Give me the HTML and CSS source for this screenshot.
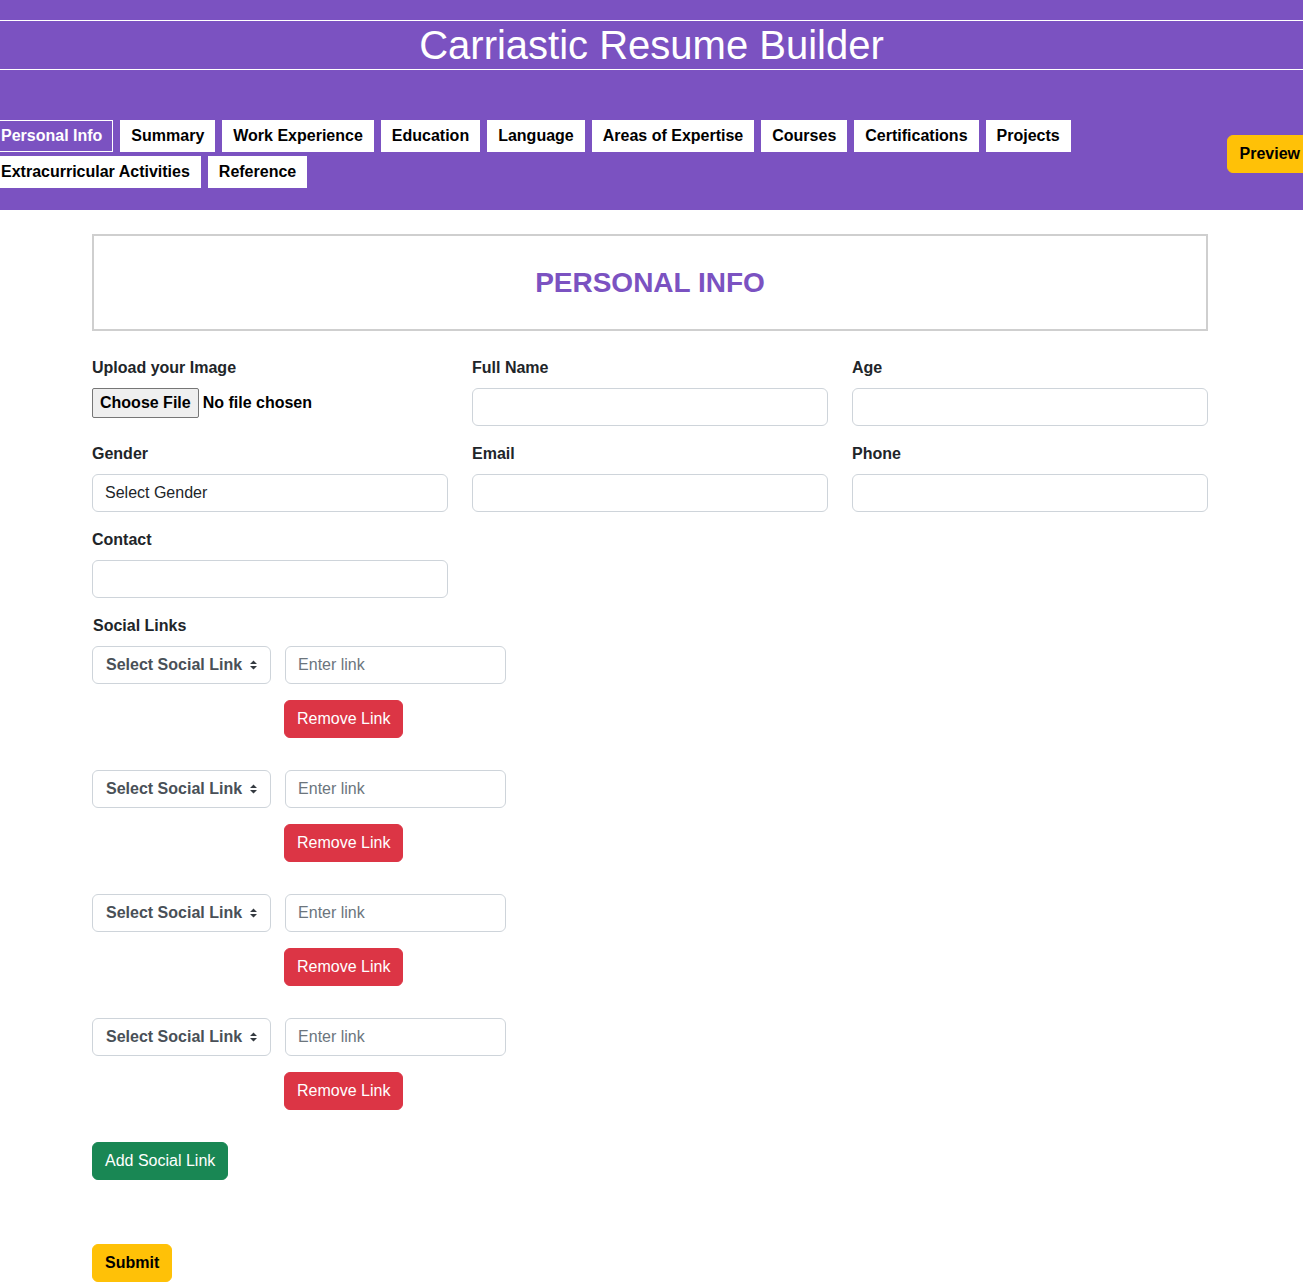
FILE: index.html
```html
<!DOCTYPE html>
<html lang="en">
<head>
<meta charset="utf-8">
<title>Carriastic Resume Builder</title>
<link rel="stylesheet" href="styles.css">
</head>
<body>
<header class="header">
  <h1 class="title">Carriastic Resume Builder</h1>
  <nav class="nav">
    <div class="tabs">
      <span class="tab active">Personal Info</span>
      <span class="tab">Summary</span>
      <span class="tab">Work Experience</span>
      <span class="tab">Education</span>
      <span class="tab">Language</span>
      <span class="tab">Areas of Expertise</span>
      <span class="tab">Courses</span>
      <span class="tab">Certifications</span>
      <span class="tab">Projects</span>
      <span class="tab">Extracurricular Activities</span>
      <span class="tab">Reference</span>
    </div>
    <button class="btn btn-warning btn-bold">Preview</button>
  </nav>
</header>

<main class="container">
  <div class="section-box">
    <h2 class="section-title">PERSONAL INFO</h2>
  </div>

  <div class="grid">
    <div class="field">
      <label class="label">Upload your Image</label>
      <div class="file">
        <span class="file-btn">Choose File</span>
        <span class="file-text">No file chosen</span>
      </div>
    </div>
    <div class="field">
      <label class="label">Full Name</label>
      <input class="input" type="text">
    </div>
    <div class="field">
      <label class="label">Age</label>
      <input class="input" type="text">
    </div>
    <div class="field">
      <label class="label">Gender</label>
      <div class="input fake-select">Select Gender</div>
    </div>
    <div class="field">
      <label class="label">Email</label>
      <input class="input" type="text">
    </div>
    <div class="field">
      <label class="label">Phone</label>
      <input class="input" type="text">
    </div>
    <div class="field">
      <label class="label">Contact</label>
      <input class="input" type="text">
    </div>
  </div>

  <label class="label social-label">Social Links</label>

  <div class="social-row">
    <div class="social-select">Select Social Link
      <svg class="arrows" width="7" height="10" viewBox="0 0 7 10"><path d="M0 4 L3.5 0.5 L7 4 Z M0 6 L3.5 9.5 L7 6 Z" fill="#343a40"/></svg>
    </div>
    <div class="link-col">
      <input class="input link-input" type="text" placeholder="Enter link">
      <button class="btn btn-danger">Remove Link</button>
    </div>
  </div>

  <div class="social-row">
    <div class="social-select">Select Social Link
      <svg class="arrows" width="7" height="10" viewBox="0 0 7 10"><path d="M0 4 L3.5 0.5 L7 4 Z M0 6 L3.5 9.5 L7 6 Z" fill="#343a40"/></svg>
    </div>
    <div class="link-col">
      <input class="input link-input" type="text" placeholder="Enter link">
      <button class="btn btn-danger">Remove Link</button>
    </div>
  </div>

  <div class="social-row">
    <div class="social-select">Select Social Link
      <svg class="arrows" width="7" height="10" viewBox="0 0 7 10"><path d="M0 4 L3.5 0.5 L7 4 Z M0 6 L3.5 9.5 L7 6 Z" fill="#343a40"/></svg>
    </div>
    <div class="link-col">
      <input class="input link-input" type="text" placeholder="Enter link">
      <button class="btn btn-danger">Remove Link</button>
    </div>
  </div>

  <div class="social-row">
    <div class="social-select">Select Social Link
      <svg class="arrows" width="7" height="10" viewBox="0 0 7 10"><path d="M0 4 L3.5 0.5 L7 4 Z M0 6 L3.5 9.5 L7 6 Z" fill="#343a40"/></svg>
    </div>
    <div class="link-col">
      <input class="input link-input" type="text" placeholder="Enter link">
      <button class="btn btn-danger">Remove Link</button>
    </div>
  </div>

  <div class="actions">
    <button class="btn btn-success">Add Social Link</button>
    <button class="btn btn-warning btn-bold submit">Submit</button>
  </div>
</main>
</body>
</html>
```

FILE: styles.css
```css
html, body {
  overflow-x: hidden;
}

body {
  margin: 0;
  font-family: "Liberation Sans", Arial, sans-serif;
  font-size: 16px;
  color: #212529;
  background: #fff;
}

.header {
  background: #7b52c1;
  padding-top: 20px;
}

.title {
  margin: 0;
  border-top: 1px solid #fff;
  border-bottom: 1px solid #fff;
  font-size: 40px;
  font-weight: normal;
  line-height: 48px;
  text-align: center;
  color: #fff;
}

.nav {
  display: flex;
  align-items: center;
  margin: 0 -10px;
  padding: 50px 0 22px;
}

.tabs {
  flex: 1;
  display: flex;
  flex-wrap: wrap;
  gap: 4px 7px;
}

.tab {
  display: block;
  background: #fff;
  border: 1px solid #fff;
  padding: 0 10px;
  font-weight: bold;
  font-size: 16px;
  line-height: 30px;
  color: #000;
  white-space: nowrap;
}

.tab.active {
  background: transparent;
  color: #fff;
}

.btn {
  display: inline-block;
  font-family: "Liberation Sans", Arial, sans-serif;
  font-size: 16px;
  line-height: 24px;
  padding: 6px 12px;
  border: 1px solid transparent;
  border-radius: 6px;
  cursor: pointer;
  white-space: nowrap;
}

.btn-bold {
  font-weight: bold;
}

.btn-warning {
  background: #ffc107;
  border-color: #ffc107;
  color: #000;
}

.btn-danger {
  background: #dc3545;
  border-color: #dc3545;
  color: #fff;
}

.btn-success {
  background: #198754;
  border-color: #198754;
  color: #fff;
}

.container {
  width: 1116px;
  margin-left: 92px;
  padding-top: 24px;
  padding-bottom: 40px;
}

.section-box {
  height: 97px;
  box-sizing: border-box;
  border: 2px solid #cfcfcf;
  display: flex;
  align-items: center;
  justify-content: center;
}

.section-title {
  margin: 0;
  font-size: 28px;
  font-weight: bold;
  color: #7b52c1;
  line-height: 34px;
}

.grid {
  display: grid;
  grid-template-columns: repeat(3, 356px);
  column-gap: 24px;
  margin-top: 25px;
}

.field {
  margin-bottom: 16px;
}

.label {
  display: block;
  font-weight: bold;
  line-height: 24px;
  margin-bottom: 8px;
  color: #212529;
}

.input {
  display: block;
  width: 100%;
  height: 38px;
  box-sizing: border-box;
  border: 1px solid #ced4da;
  border-radius: 6px;
  padding: 6px 12px;
  font-family: "Liberation Sans", Arial, sans-serif;
  font-size: 16px;
  line-height: 24px;
  color: #212529;
  background: #fff;
}

.input::placeholder {
  color: #6c757d;
}

.fake-select {
  color: #212529;
}

.file {
  display: flex;
  align-items: center;
  gap: 4px;
  font-weight: bold;
}

.file-btn {
  display: block;
  height: 30px;
  box-sizing: border-box;
  padding: 0 7px;
  line-height: 28px;
  background: #efefef;
  border: 1px solid #767676;
  border-radius: 2px;
  color: #000;
}

.file-text {
  color: #000;
}

.social-label {
  padding-left: 1px;
}

.social-row {
  display: flex;
  align-items: flex-start;
  gap: 13px;
  margin-bottom: 32px;
}

.social-select {
  display: flex;
  align-items: center;
  gap: 8px;
  height: 38px;
  box-sizing: border-box;
  padding: 0 13px;
  border: 1px solid #ced4da;
  border-radius: 6px;
  font-weight: bold;
  color: #495057;
  white-space: nowrap;
}

.arrows {
  display: block;
}

.link-col {
  display: flex;
  flex-direction: column;
  align-items: flex-start;
  gap: 16px;
}

.link-input {
  width: 221px;
  margin-left: 1px;
}

.actions {
  display: flex;
  flex-direction: column;
  align-items: flex-start;
  gap: 64px;
}
```
